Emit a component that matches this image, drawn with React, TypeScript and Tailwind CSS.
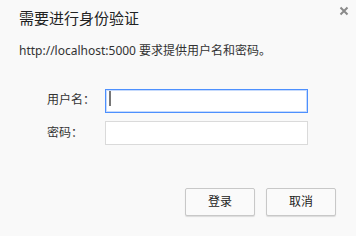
import { useState } from 'react'

const font = { fontFamily: '"Noto Sans", "Noto Sans CJK SC", sans-serif' }

export default function App() {
  const [user, setUser] = useState('')
  const [pass, setPass] = useState('')

  return (
    <div
      className="relative w-[356px] h-[236px] bg-[#f9f9f9] text-[#333] overflow-hidden"
      style={font}
    >
      {/* close */}
      <button className="absolute right-[7px] top-[6px] w-[10px] h-[10px] flex items-center justify-center">
        <svg viewBox="0 0 10 10" className="w-[10px] h-[10px]">
          <path d="M1.5 1.5 L8.5 8.5 M8.5 1.5 L1.5 8.5" stroke="#8a8a8a" strokeWidth="2" />
        </svg>
      </button>

      <div className="pl-[19px] pt-[8px]">
        <h1 className="text-[15px] leading-[20px] text-[#222]">需要进行身份验证</h1>
        <p className="mt-[15px] text-[12px] leading-[16px] text-[#333]">
          http://localhost:5000 要求提供用户名和密码。
        </p>
      </div>

      <div className="mt-[28px] flex flex-col gap-[8px]">
        <div className="flex items-center">
          <label className="w-[105px] pl-[47px] text-[12px] leading-[24px]">用户名：</label>
          <div className="relative">
            <input
              value={user}
              onChange={(e) => setUser(e.target.value)}
              className="w-[203px] h-[24px] bg-white border border-[#4d90fe] shadow-[inset_0_0_0_1px_#c6dafc] outline-none px-[4px] text-[12px]"
            />
            {/* caret */}
            {user === '' && (
              <span className="absolute left-[4px] top-[4px] w-[2px] h-[15px] bg-[#777]" />
            )}
          </div>
        </div>
        <div className="flex items-center">
          <label className="w-[105px] pl-[47px] text-[12px] leading-[24px]">密码：</label>
          <input
            type="password"
            value={pass}
            onChange={(e) => setPass(e.target.value)}
            className="w-[203px] h-[24px] bg-white border border-[#dadada] outline-none px-[4px] text-[12px]"
          />
        </div>
      </div>

      <div className="mt-[43px] pr-[20px] flex justify-end gap-[11px]">
        <button className="w-[70px] h-[28px] bg-[#fafafa] border border-[#c8c8c8] rounded-[2px] shadow-[0_1px_1px_rgba(0,0,0,0.12)] text-[12px] text-[#222]">
          登录
        </button>
        <button className="w-[70px] h-[28px] bg-[#fafafa] border border-[#c8c8c8] rounded-[2px] shadow-[0_1px_1px_rgba(0,0,0,0.12)] text-[12px] text-[#222]">
          取消
        </button>
      </div>
    </div>
  )
}
